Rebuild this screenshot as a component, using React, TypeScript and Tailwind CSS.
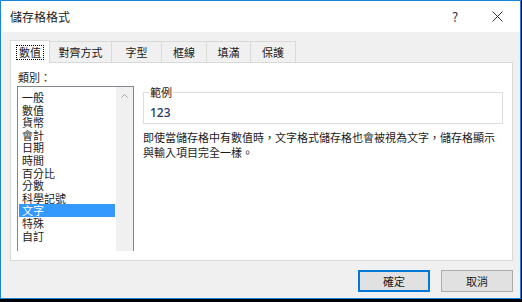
const font = "font-['Segoe_UI','Noto_Sans_CJK_TC','Noto_Sans',sans-serif]";

const categories = [
  "一般",
  "數值",
  "貨幣",
  "會計",
  "日期",
  "時間",
  "百分比",
  "分數",
  "科學記號",
  "文字",
  "特殊",
  "自訂",
];

const tabs = [
  { label: "數值", width: "w-[40px]" },
  { label: "對齊方式", width: "w-[62px]" },
  { label: "字型", width: "w-[50px]" },
  { label: "框線", width: "w-[45px]" },
  { label: "填滿", width: "w-[44px]" },
  { label: "保護", width: "w-[45px]" },
];

export default function App() {
  return (
    <div className={`w-[522px] h-[302px] bg-black ${font} text-[11px] text-[#1a1a1a]`}>
      <div className="w-[521px] h-[299px] border border-[#1883d7] bg-[#f0f0f0] flex flex-col">
        {/* Title bar */}
        <div className="h-[31px] bg-white flex items-center pl-[9px] shrink-0">
          <span className="text-[12px] leading-none text-[#222]">儲存格格式</span>
          <span className="ml-auto w-[12px] text-center text-[13px] leading-none text-[#333]">?</span>
          <svg
            className="ml-[31px] mr-[17px] w-[11px] h-[11px]"
            viewBox="0 0 11 11"
            fill="none"
            stroke="#333"
            strokeWidth={1}
          >
            <path d="M0.5 0.5 L10.5 10.5 M10.5 0.5 L0.5 10.5" />
          </svg>
        </div>

        <div className="pl-[9px] pr-[7px] flex flex-col">
          {/* Tabs */}
          <div className="flex items-end h-[30px] relative z-10">
            {tabs.map((tab, i) =>
              i === 0 ? (
                <div
                  key={tab.label}
                  className={`${tab.width} h-[23px] -mb-px bg-white border border-b-0 border-[#d9d9d9] flex items-center justify-center`}
                >
                  <span className="px-[2px] h-[15px] leading-[13px] border border-dotted border-black">
                    {tab.label}
                  </span>
                </div>
              ) : (
                <div
                  key={tab.label}
                  className={`${tab.width} h-[21px] bg-[#f0f0f0] border border-b-0 border-l-0 border-[#d9d9d9] flex items-center justify-center`}
                >
                  {tab.label}
                </div>
              )
            )}
          </div>

          {/* Panel */}
          <div className="h-[199px] bg-white border border-[#d9d9d9] flex pl-[6px] pr-[9px]">
            <div className="flex flex-col w-[120px]">
              <div className="h-[23px] pl-[1px] flex items-center pt-[6px]">類別：</div>
              <div className="h-[165px] border border-b-0 border-[#828790] flex">
                <div className="flex-1 pt-[4px] pl-[1px] pr-[1px]">
                  {categories.map((c) => (
                    <div
                      key={c}
                      className={`h-[12.6px] leading-[12.6px] pl-[3px] ${
                        c === "文字" ? "bg-[#3399ff] text-white" : ""
                      }`}
                    >
                      {c}
                    </div>
                  ))}
                </div>
                <div className="w-[17px] bg-[#f0f0f0] flex justify-center pt-[7px]">
                  <svg className="w-[7px] h-[4px]" viewBox="0 0 7 4" fill="none" stroke="#a3a3a3" strokeWidth={1}>
                    <path d="M0.5 3.5 L3.5 0.5 L6.5 3.5" />
                  </svg>
                </div>
              </div>
            </div>

            <div className="flex-1 pl-[9px] pt-[23px]">
              <fieldset className="border border-[#dcdcdc] h-[38px] px-[6px]">
                <legend className="px-[1px] ml-[-1px] leading-[12px]">範例</legend>
                <div className="text-[#24346b] text-[12px] font-medium leading-[14px] mt-[8px] font-['Segoe_UI','Noto_Sans',sans-serif]">
                  123
                </div>
              </fieldset>
              <p className="mt-[6px] leading-[15px] w-[360px]">
                即使當儲存格中有數值時，文字格式儲存格也會被視為文字，儲存格顯示與輸入項目完全一樣。
              </p>
            </div>
          </div>

          {/* Buttons */}
          <div className="flex justify-end gap-[11px] mt-[9px]">
            <button className="w-[72px] h-[22px] bg-[#e1e1e1] border border-[#0078d7] shadow-[inset_0_0_0_1px_#0078d7] leading-none">
              確定
            </button>
            <button className="w-[72px] h-[22px] bg-[#e1e1e1] border border-[#adadad] leading-none">
              取消
            </button>
          </div>
        </div>
      </div>
    </div>
  );
}
